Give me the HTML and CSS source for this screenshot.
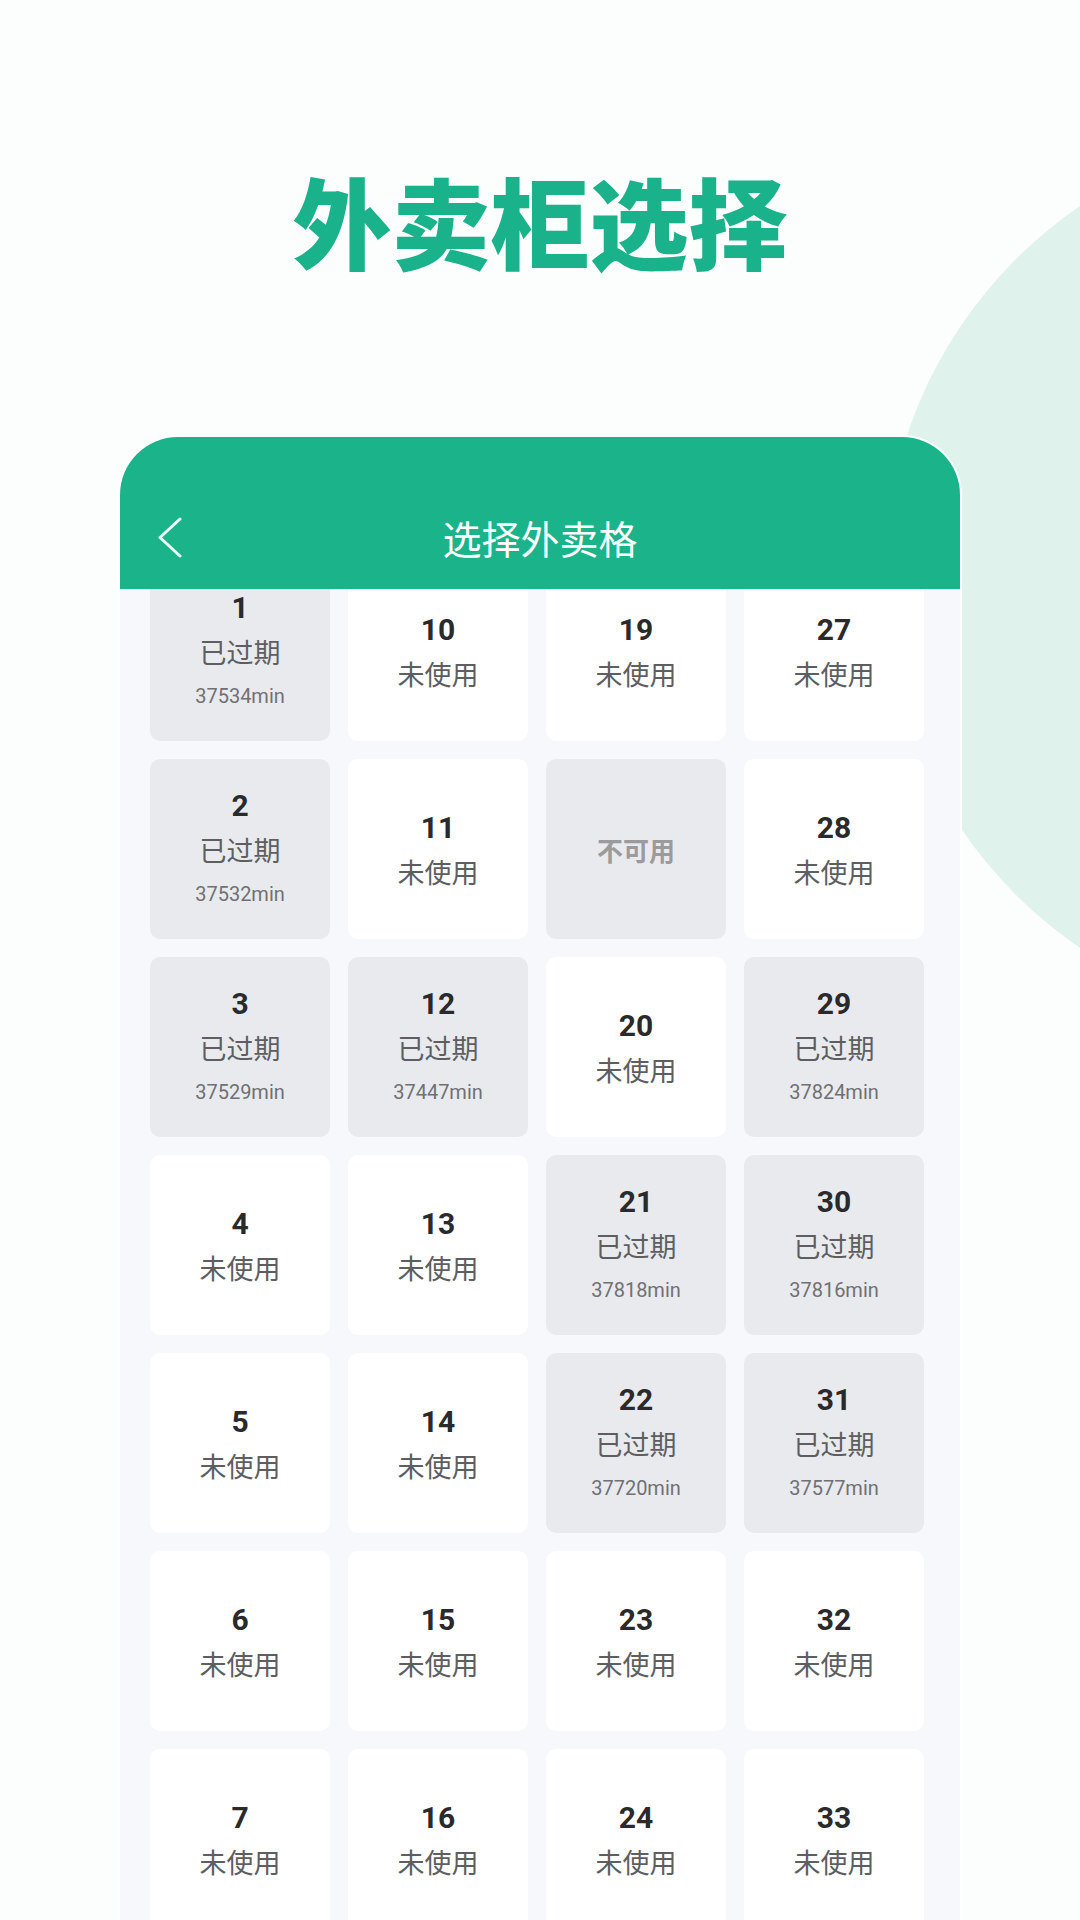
FILE: index.html
```html
<!DOCTYPE html>
<html lang="zh-CN">
<head>
<meta charset="utf-8">
<title>外卖柜选择</title>
<link rel="stylesheet" href="styles.css">
</head>
<body>
<div class="page">
  <div class="bg-circle"></div>
  <h1 class="hero-title">外卖柜选择</h1>
  <div class="card">
    <div class="card-header">
      <div class="nav">
        <div class="nav-back">
          <svg class="chev" width="26" height="41" viewBox="0 0 26 41"><polyline points="23,2 3,20.5 23,39" fill="none" stroke="#eafff8" stroke-width="3" stroke-linecap="round" stroke-linejoin="round"/></svg>
        </div>
        <div class="nav-title">选择外卖格</div>
        <div class="nav-side"></div>
      </div>
    </div>
    <div class="card-body">
      <div class="grid">
        <div class="cell gray"><div class="num">1</div><div class="status">已过期</div><div class="mins">37534min</div></div>
        <div class="cell"><div class="num">10</div><div class="status">未使用</div></div>
        <div class="cell"><div class="num">19</div><div class="status">未使用</div></div>
        <div class="cell"><div class="num">27</div><div class="status">未使用</div></div>

        <div class="cell gray"><div class="num">2</div><div class="status">已过期</div><div class="mins">37532min</div></div>
        <div class="cell"><div class="num">11</div><div class="status">未使用</div></div>
        <div class="cell gray"><div class="na">不可用</div></div>
        <div class="cell"><div class="num">28</div><div class="status">未使用</div></div>

        <div class="cell gray"><div class="num">3</div><div class="status">已过期</div><div class="mins">37529min</div></div>
        <div class="cell gray"><div class="num">12</div><div class="status">已过期</div><div class="mins">37447min</div></div>
        <div class="cell"><div class="num">20</div><div class="status">未使用</div></div>
        <div class="cell gray"><div class="num">29</div><div class="status">已过期</div><div class="mins">37824min</div></div>

        <div class="cell"><div class="num">4</div><div class="status">未使用</div></div>
        <div class="cell"><div class="num">13</div><div class="status">未使用</div></div>
        <div class="cell gray"><div class="num">21</div><div class="status">已过期</div><div class="mins">37818min</div></div>
        <div class="cell gray"><div class="num">30</div><div class="status">已过期</div><div class="mins">37816min</div></div>

        <div class="cell"><div class="num">5</div><div class="status">未使用</div></div>
        <div class="cell"><div class="num">14</div><div class="status">未使用</div></div>
        <div class="cell gray"><div class="num">22</div><div class="status">已过期</div><div class="mins">37720min</div></div>
        <div class="cell gray"><div class="num">31</div><div class="status">已过期</div><div class="mins">37577min</div></div>

        <div class="cell"><div class="num">6</div><div class="status">未使用</div></div>
        <div class="cell"><div class="num">15</div><div class="status">未使用</div></div>
        <div class="cell"><div class="num">23</div><div class="status">未使用</div></div>
        <div class="cell"><div class="num">32</div><div class="status">未使用</div></div>

        <div class="cell"><div class="num">7</div><div class="status">未使用</div></div>
        <div class="cell"><div class="num">16</div><div class="status">未使用</div></div>
        <div class="cell"><div class="num">24</div><div class="status">未使用</div></div>
        <div class="cell"><div class="num">33</div><div class="status">未使用</div></div>
      </div>
    </div>
  </div>
</div>
</body>
</html>
```
FILE: styles.css
```css
html, body {
  margin: 0;
  padding: 0;
}
body {
  background: #fcfefd;
  font-family: "Noto Sans CJK SC", "Noto Sans", sans-serif;
}
.page {
  position: relative;
  width: 1080px;
  height: 1920px;
  overflow: hidden;
  display: flex;
  flex-direction: column;
  background: #fcfefd;
}
.bg-circle {
  position: absolute;
  left: 884px;
  top: 128px;
  width: 898px;
  height: 898px;
  border-radius: 50%;
  background: #dff2ec;
  z-index: 0;
}
.hero-title {
  position: relative;
  z-index: 1;
  margin: 169px 0 0;
  text-align: center;
  font-family: "Noto Sans CJK SC", sans-serif;
  font-weight: 900;
  font-size: 99px;
  line-height: 100px;
  color: #1ab28a;
}
.card {
  position: relative;
  z-index: 1;
  margin: 168px 0 0 120px;
  width: 840px;
  flex: 1;
  display: flex;
  flex-direction: column;
  background: #f7f8fc;
  border-radius: 58px 58px 0 0;
  box-shadow: 0 0 0 2px #ffffff;
  overflow: hidden;
}
.card-header {
  position: relative;
  z-index: 2;
  background: #1ab38a;
  height: 154px;
  padding-top: 48px;
  box-sizing: border-box;
}
.nav {
  height: 104px;
  display: grid;
  grid-template-columns: 1fr auto 1fr;
  align-items: center;
}
.nav-back {
  padding-left: 37px;
  display: flex;
  align-items: center;
}
.chev {
  display: block;
}
.nav-title {
  color: #ffffff;
  font-size: 39px;
  line-height: 44px;
  font-weight: 400;
  letter-spacing: 0;
}
.card-body {
  flex: 1;
  position: relative;
  z-index: 1;
}
.grid {
  margin-top: -28px;
  padding: 0 36px 0 30px;
  display: grid;
  grid-template-columns: repeat(4, 180px);
  grid-auto-rows: 180px;
  column-gap: 18px;
  row-gap: 18px;
}
.cell {
  background: #ffffff;
  border-radius: 10px;
  display: flex;
  flex-direction: column;
  align-items: center;
  justify-content: center;
  padding-top: 2px;
  box-sizing: border-box;
}
.cell.gray {
  background: #e9eaee;
}
.num {
  font-family: Roboto, "Noto Sans", sans-serif;
  font-weight: 700;
  font-size: 30px;
  line-height: 44px;
  color: #2a2a2c;
}
.status {
  font-size: 27px;
  line-height: 44px;
  color: #5e5e60;
}
.mins {
  font-family: Roboto, "Noto Sans", sans-serif;
  font-size: 20px;
  line-height: 44px;
  color: #707074;
}
.na {
  font-size: 26px;
  line-height: 44px;
  font-weight: 700;
  color: #9b9b9d;
}
```
